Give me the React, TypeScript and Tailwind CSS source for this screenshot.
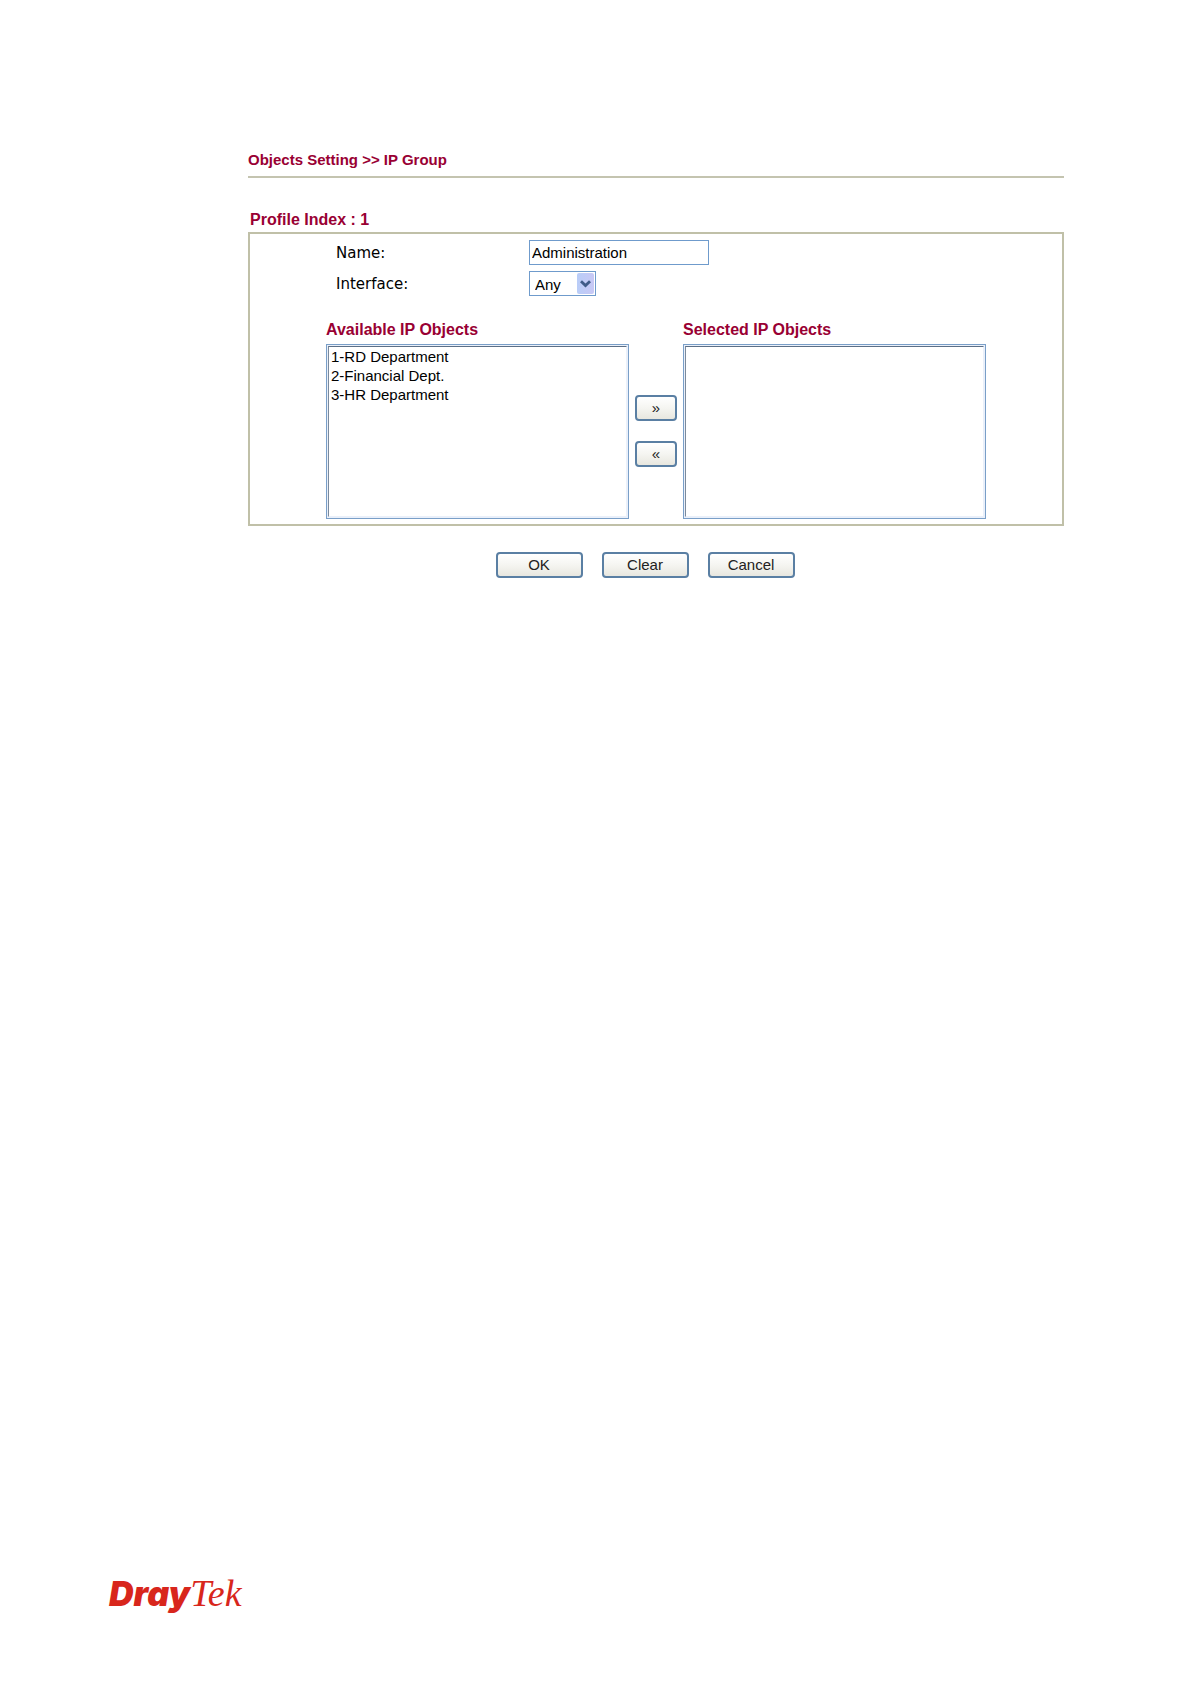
import React, { useState } from 'react';

const AVAILABLE = ['1-RD Department', '2-Financial Dept.', '3-HR Department'];

const ListBox = ({
  id,
  label,
  items,
  selected,
  onSelect,
}: {
  id: string;
  label: string;
  items: string[];
  selected: string[];
  onSelect: (values: string[]) => void;
}) => (
  <div className="w-[303px]">
    <label htmlFor={id} className="block h-6 text-base leading-5 font-bold text-[#990033]">
      {label}
    </label>
    <div className="h-[175px] border border-[#7a9fc8] bg-[#eaf0fa] p-px">
      <select
        id={id}
        multiple
        value={selected}
        onChange={(e) => onSelect(Array.from(e.target.selectedOptions, (o) => o.value))}
        className="block h-full w-full overflow-hidden border border-t-[#5c6f86] border-r-[#eaf0fa] border-b-[#eaf0fa] border-l-[#7c8a9c] bg-white py-px text-black outline-none"
      >
        {items.map((item) => (
          <option key={item} value={item} className="h-[19px] p-0 px-0.5 leading-[19px]">
            {item}
          </option>
        ))}
      </select>
    </div>
  </div>
);

const XpButton = ({
  children,
  className,
  ...rest
}: React.ButtonHTMLAttributes<HTMLButtonElement>) => (
  <button
    type="button"
    className={`h-[26px] rounded-[4px] border-2 border-[#5a7fa3] bg-linear-to-b from-white via-[#f5f5f1] to-[#e8e7df] leading-5 text-[#222] ${className}`}
    {...rest}
  >
    {children}
  </button>
);

export default function App() {
  const [name, setName] = useState('Administration');
  const [iface, setIface] = useState('Any');
  const [available, setAvailable] = useState(AVAILABLE);
  const [chosen, setChosen] = useState<string[]>([]);
  const [markedLeft, setMarkedLeft] = useState<string[]>([]);
  const [markedRight, setMarkedRight] = useState<string[]>([]);

  const add = () => {
    setChosen([...chosen, ...markedLeft].sort());
    setAvailable(available.filter((i) => !markedLeft.includes(i)));
    setMarkedLeft([]);
  };

  const remove = () => {
    setAvailable([...available, ...markedRight].sort());
    setChosen(chosen.filter((i) => !markedRight.includes(i)));
    setMarkedRight([]);
  };

  const clear = () => {
    setName('');
    setIface('Any');
    setAvailable(AVAILABLE);
    setChosen([]);
  };

  return (
    <div className="flex min-h-screen flex-col justify-between bg-white font-['Liberation_Sans',Arial,sans-serif] text-[15px] text-black">
      <main className="mr-[126px] ml-[248px] pt-[150px]">
        <h1 className="h-7 border-b-2 border-[#c4c4b0] leading-5 font-bold text-[#990033]">
          Objects Setting &gt;&gt; IP Group
        </h1>

        <form>
          <h2 className="mt-8 h-[22px] pl-0.5 text-base leading-5 font-bold text-[#990033]">Profile Index : 1</h2>

          <div className="border-2 border-[#c0c0a8] px-[76px] pt-1.5 pb-[5px]">
            {/* Profile fields */}
            <div className="flex flex-col gap-1.5 pl-2.5">
              <div className="flex items-center">
                <label htmlFor="name" className="w-[193px] pt-0.5 font-['DejaVu_Sans',Verdana,sans-serif]">
                  Name:
                </label>
                <input
                  id="name"
                  type="text"
                  value={name}
                  onChange={(e) => setName(e.target.value)}
                  className="h-[25px] w-[180px] border border-[#6f9bcc] bg-white px-0.5 outline-none"
                />
              </div>
              <div className="flex items-center">
                <label htmlFor="iface" className="w-[193px] pt-0.5 font-['DejaVu_Sans',Verdana,sans-serif]">
                  Interface:
                </label>
                <div className="relative">
                  <select
                    id="iface"
                    value={iface}
                    onChange={(e) => setIface(e.target.value)}
                    className="block h-[25px] w-[67px] appearance-none border border-[#6f9bcc] bg-white pt-0.5 pl-[5px] outline-none"
                  >
                    <option>Any</option>
                    <option>LAN</option>
                    <option>WAN</option>
                  </select>
                  <span className="pointer-events-none absolute top-0.5 right-0.5 flex h-[21px] w-[17px] items-center justify-center rounded-xs bg-linear-to-r from-[#b9cdf8] to-[#c8c8f5]">
                    <svg width="11" height="8" viewBox="0 0 11 8" fill="none" stroke="#3f5b88" strokeWidth="2.8">
                      <path d="M1 1.2 L5.5 5.6 L10 1.2" />
                    </svg>
                  </span>
                </div>
              </div>
            </div>

            {/* Object pickers */}
            <div className="mt-6 flex">
              <ListBox
                id="available"
                label="Available IP Objects"
                items={available}
                selected={markedLeft}
                onSelect={setMarkedLeft}
              />
              <div className="flex w-[54px] flex-col items-center gap-5 pt-[75px]">
                <XpButton className="w-[42px]" onClick={add} aria-label="Add">
                  »
                </XpButton>
                <XpButton className="w-[42px]" onClick={remove} aria-label="Remove">
                  «
                </XpButton>
              </div>
              <ListBox
                id="selected"
                label="Selected IP Objects"
                items={chosen}
                selected={markedRight}
                onSelect={setMarkedRight}
              />
            </div>
          </div>

          <div className="mt-[26px] flex justify-center gap-[19px] pr-[22px]">
            <XpButton className="w-[87px]">OK</XpButton>
            <XpButton className="w-[87px]" onClick={clear}>
              Clear
            </XpButton>
            <XpButton className="w-[87px]">Cancel</XpButton>
          </div>
        </form>
      </main>

      <footer className="flex items-baseline pb-[70px] pl-[109px] leading-10 text-[#d8261c]">
        <span className="font-['Inter',sans-serif] text-[34px] font-black italic">Dray</span>
        <span className="font-['Liberation_Serif',serif] text-[38px] italic">Tek</span>
      </footer>
    </div>
  );
}
